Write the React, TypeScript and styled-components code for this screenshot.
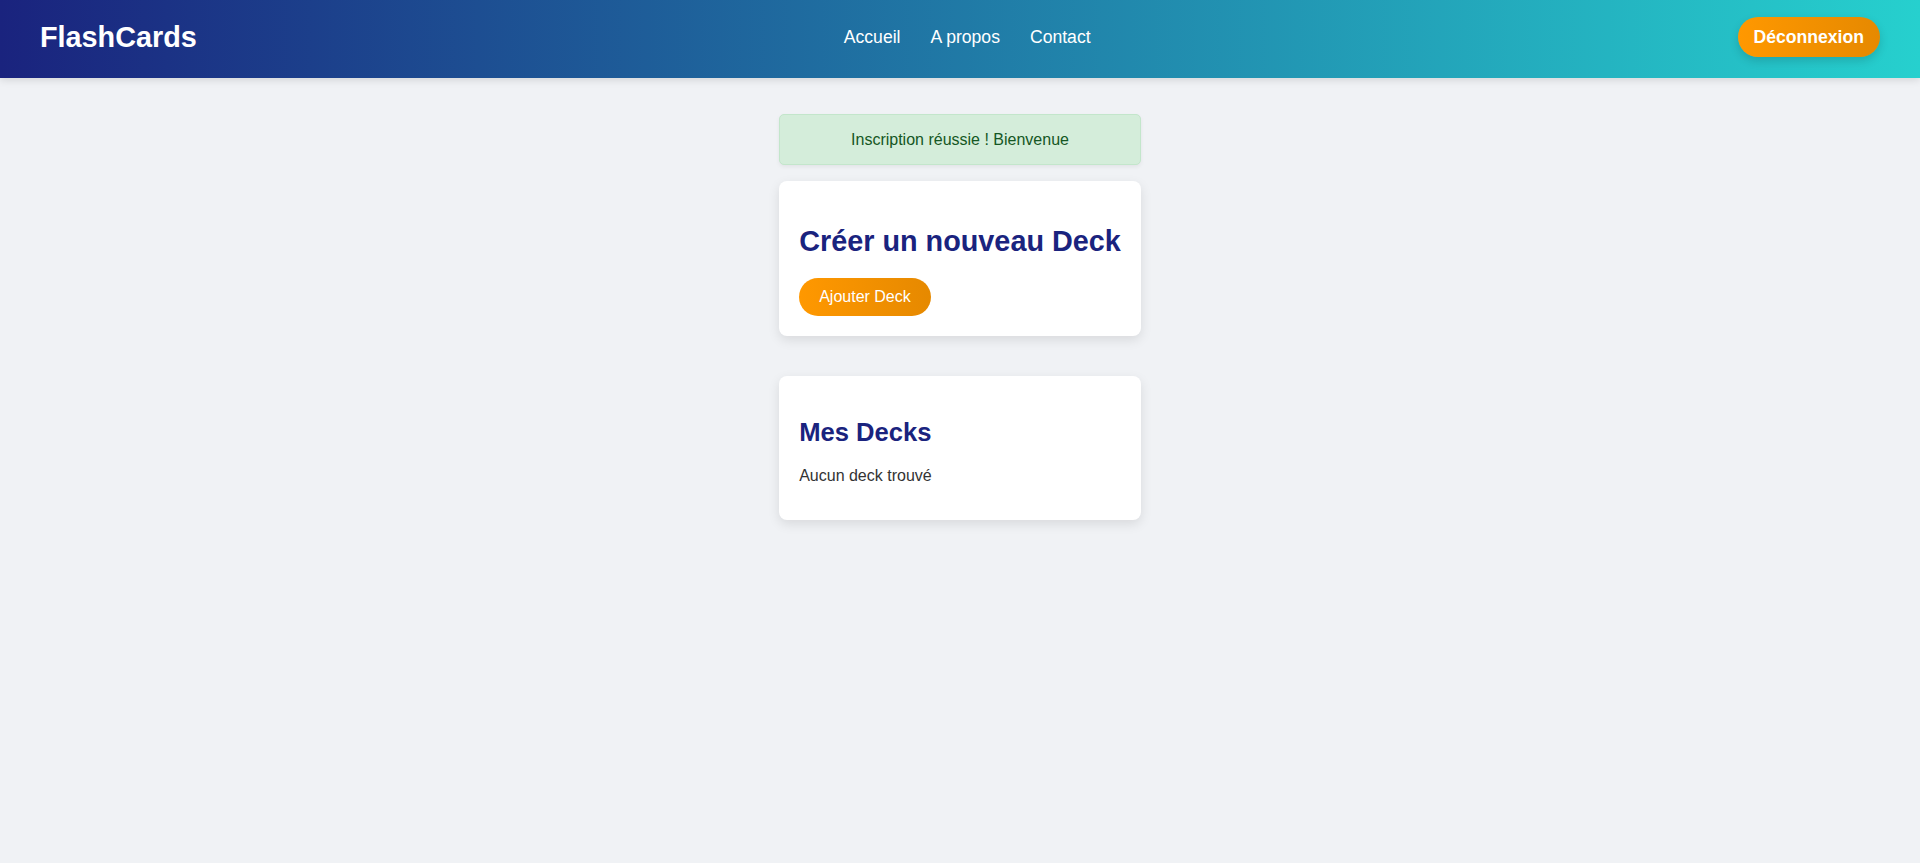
import React from "react";
import styled, { createGlobalStyle } from "styled-components";

const GlobalStyle = createGlobalStyle`
  html, body {
    margin: 0;
    padding: 0;
  }
  body {
    background: #f0f2f5;
    font-family: "Liberation Sans", Arial, sans-serif;
    color: #333;
    min-height: 100vh;
  }
  * { box-sizing: border-box; }
`;

const Header = styled.header`
  display: flex;
  align-items: center;
  justify-content: space-between;
  padding: 17px 40px 21px;
  background: linear-gradient(90deg, #1a237e 0%, #26d0ce 100%);
  box-shadow: 0 2px 8px rgba(0, 0, 0, 0.12);
  position: relative;
  z-index: 1;
`;

const Logo = styled.div`
  color: #fff;
  font-size: 28.8px;
  font-weight: 700;
`;

const Nav = styled.nav`
  display: flex;
  align-items: center;
  gap: 30px;
`;

const NavLink = styled.a`
  color: #fff;
  font-size: 17.6px;
  text-decoration: none;
`;

const LogoutButton = styled.button`
  font-family: inherit;
  font-size: 17.6px;
  font-weight: 700;
  color: #fff;
  border: none;
  border-radius: 999px;
  padding: 10px 16px;
  line-height: 20px;
  background: linear-gradient(90deg, #ff9800 0%, #e68900 100%);
  box-shadow: 0 4px 10px rgba(0, 0, 0, 0.15);
  cursor: pointer;
`;

const Main = styled.main`
  display: flex;
  justify-content: center;
  padding-top: 36px;
`;

const Column = styled.div`
  display: flex;
  flex-direction: column;
  align-items: stretch;
  width: fit-content;
`;

const Alert = styled.div`
  background: #d4edda;
  color: #155724;
  border: 1px solid #c3e6cb;
  border-radius: 5px;
  padding: 15px;
  line-height: 19px;
  text-align: center;
  font-size: 16px;
  box-shadow: 0 2px 4px rgba(0, 0, 0, 0.06);
  margin-bottom: 16px;
`;

const Card = styled.section<{ $gapAfter?: number }>`
  background: #fff;
  border-radius: 8px;
  padding: 20px;
  box-shadow: 0 4px 12px rgba(0, 0, 0, 0.1);
  margin-bottom: ${(p) => p.$gapAfter ?? 0}px;
`;

const Title = styled.h2<{ $size: number }>`
  color: #1a237e;
  font-size: ${(p) => p.$size}px;
  font-weight: 700;
  margin: 0.83em 0 20px;
  white-space: nowrap;
`;

const AddButton = styled.button`
  font-family: inherit;
  font-size: 16px;
  color: #fff;
  border: none;
  border-radius: 999px;
  padding: 10px 20px;
  line-height: 18.4px;
  background: linear-gradient(90deg, #ff9800 0%, #e68900 100%);
  cursor: pointer;
`;

const EmptyText = styled.p`
  margin: 16px 0 15px;
  font-size: 16px;
  color: #333;
`;

export default function App() {
  return (
    <>
      <GlobalStyle />
      <Header>
        <Logo>FlashCards</Logo>
        <Nav>
          <NavLink href="#">Accueil</NavLink>
          <NavLink href="#">A propos</NavLink>
          <NavLink href="#">Contact</NavLink>
        </Nav>
        <LogoutButton>Déconnexion</LogoutButton>
      </Header>
      <Main>
        <Column>
          <Alert>Inscription réussie ! Bienvenue</Alert>
          <Card $gapAfter={40}>
            <Title $size={28.8}>Créer un nouveau Deck</Title>
            <AddButton>Ajouter Deck</AddButton>
          </Card>
          <Card>
            <Title $size={25.6}>Mes Decks</Title>
            <EmptyText>Aucun deck trouvé</EmptyText>
          </Card>
        </Column>
      </Main>
    </>
  );
}
